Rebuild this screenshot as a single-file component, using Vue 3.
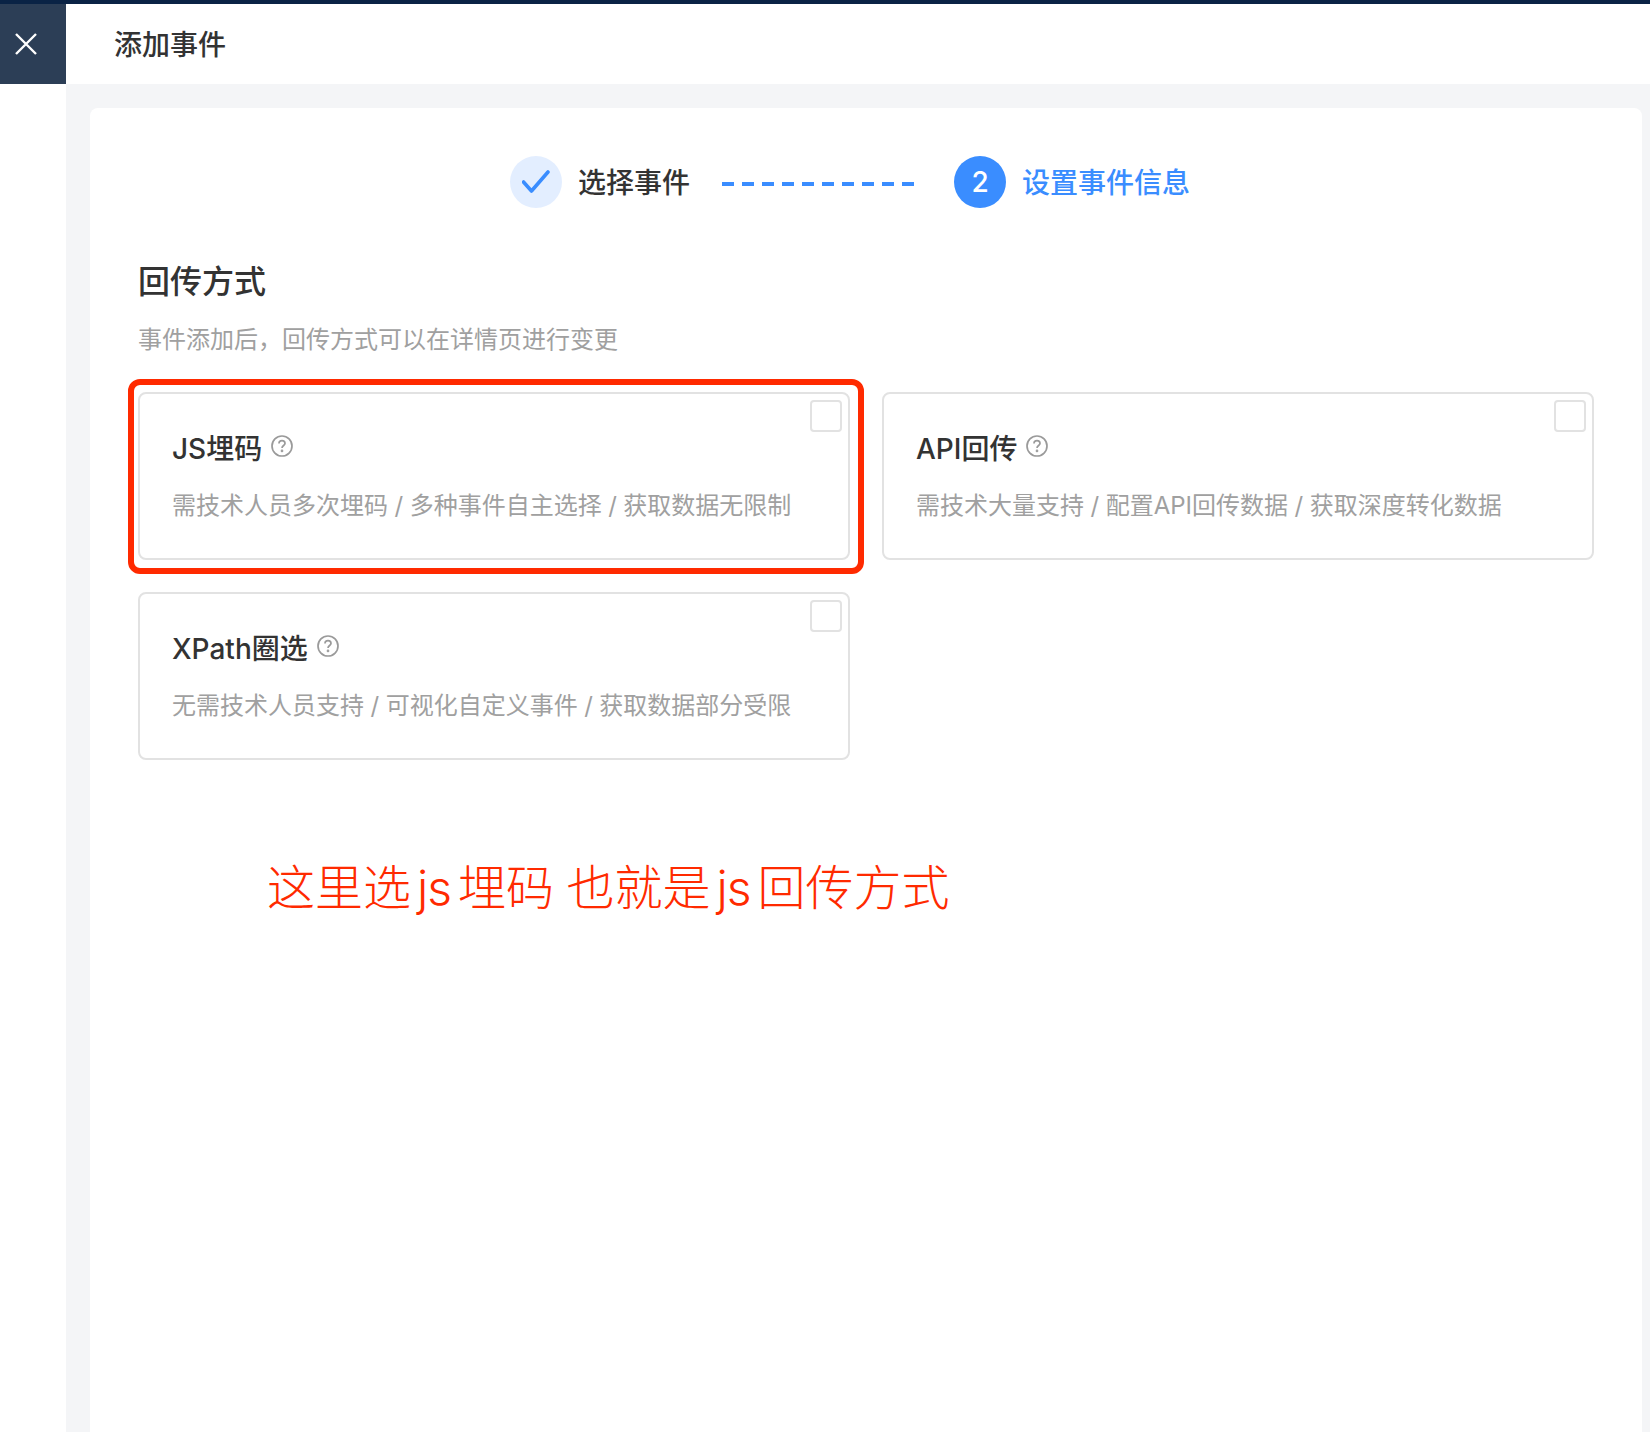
<script setup>
const cards = [
  { title: 'JS埋码', desc: '需技术人员多次埋码 / 多种事件自主选择 / 获取数据无限制', marked: true },
  { title: 'API回传', desc: '需技术大量支持 / 配置API回传数据 / 获取深度转化数据' },
  { title: 'XPath圈选', desc: '无需技术人员支持 / 可视化自定义事件 / 获取数据部分受限' }
]
</script>

<template>
  <div class="page">
    <div class="topline"></div>
    <header class="header">
      <div class="close">
        <svg width="24" height="24" viewBox="0 0 24 24" fill="none" stroke="#fff" stroke-width="2.4"><path d="M2 2L22 22M22 2L2 22"/></svg>
      </div>
      <div class="header-title">添加事件</div>
    </header>
    <div class="body">
      <div class="rail"></div>
      <main class="main">
        <section class="card">
          <div class="steps">
            <div class="circle done">
              <svg width="28" height="24" viewBox="0 0 28 24" fill="none" stroke="#3a8dff" stroke-width="3.6" stroke-linecap="round" stroke-linejoin="round"><path d="M1.5 12L9.5 21L26 2"/></svg>
            </div>
            <span class="step-label">选择事件</span>
            <div class="dash"></div>
            <div class="circle active">2</div>
            <span class="step-label blue">设置事件信息</span>
          </div>
          <h2 class="heading">回传方式</h2>
          <p class="sub">事件添加后，回传方式可以在详情页进行变更</p>
          <div class="grid">
            <div v-for="c in cards" :key="c.title" class="option" :class="{ marked: c.marked }">
              <span class="check"></span>
              <div class="option-title">
                <span>{{ c.title }}</span>
                <svg class="help" width="22" height="22" viewBox="0 0 22 22" fill="none" stroke="#9a9a9a" stroke-width="1.7">
                  <circle cx="11" cy="11" r="10"/>
                  <path d="M8 8.6C8 6.8 9.3 5.7 11 5.7S14 6.8 14 8.4C14 10.4 11 10.6 11 13"/>
                  <circle cx="11" cy="15.9" r="0.5" fill="#9a9a9a"/>
                </svg>
              </div>
              <div class="option-desc">{{ c.desc }}</div>
            </div>
          </div>
          <div class="note">这里选<span class="latin">js</span>埋码 也就是<span class="latin">js</span>回传方式</div>
        </section>
      </main>
    </div>
  </div>
</template>

<style>
html, body { margin: 0; background: #fff; overflow: hidden; }
</style>

<style scoped>
.page {
  width: 1650px;
  height: 1432px;
  overflow: hidden;
  display: flex;
  flex-direction: column;
  background: #fff;
  font-family: "Inter", "Noto Sans CJK SC", sans-serif;
  color: #333;
}
.topline { height: 4px; background: #0a2345; flex: none; }
.header { height: 80px; flex: none; display: flex; align-items: center; background: #fff; }
.close {
  width: 66px;
  height: 80px;
  background: #2c3e56;
  display: flex;
  align-items: center;
  justify-content: center;
  box-sizing: border-box;
  padding-right: 15px;
}
.header-title { margin: -2px 0 0 48px; font-size: 28px; font-weight: 500; color: #333; }
.body { flex: 1; display: flex; min-height: 0; }
.rail { width: 66px; flex: none; background: #fff; }
.main { flex: 1; background: #f4f5f7; padding: 24px 8px 0 24px; min-width: 0; }
.card {
  background: #fff;
  border-radius: 8px 8px 0 0;
  height: 100%;
  box-sizing: border-box;
  padding: 48px 48px 0 48px;
}
.steps { display: flex; align-items: center; height: 52px; padding-left: 372px; }
.circle {
  width: 52px;
  height: 52px;
  border-radius: 50%;
  display: flex;
  align-items: center;
  justify-content: center;
  flex: none;
}
.done { background: #e3eeff; }
.active { background: #3a8dff; color: #fff; font-size: 28px; font-weight: 500; }
.step-label { margin: 2px 0 0 16px; font-size: 28px; font-weight: 500; color: #333; line-height: 52px; }
.blue { color: #3a8dff; }
.dash {
  width: 192px;
  height: 4px;
  margin: 3px 40px 0 32px;
  background: repeating-linear-gradient(90deg, #3a8dff 0 12px, transparent 12px 20px);
}
.heading { margin: 52px 0 0; font-size: 32px; line-height: 44px; font-weight: 500; color: #333; }
.sub { margin: 19px 0 0; font-size: 24px; line-height: 34px; color: #a0a0a0; }
.grid {
  display: grid;
  grid-template-columns: 712px 712px;
  column-gap: 32px;
  row-gap: 32px;
  margin-top: 35px;
}
.option {
  position: relative;
  height: 168px;
  box-sizing: border-box;
  border: 2px solid #e2e2e2;
  border-radius: 8px;
  padding: 35px 32px 0;
}
.marked::after {
  content: "";
  position: absolute;
  left: -12px;
  top: -15px;
  width: 724px;
  height: 183px;
  border: 6px solid #ff2a00;
  border-radius: 12px;
}
.check {
  position: absolute;
  top: 6px;
  right: 6px;
  width: 32px;
  height: 32px;
  box-sizing: border-box;
  border: 2px solid #e2e2e2;
  border-radius: 4px;
}
.option-title {
  display: flex;
  align-items: center;
  gap: 9px;
  font-size: 28px;
  line-height: 40px;
  font-weight: 500;
  color: #333;
}
.help { margin-top: -6px; flex: none; }
.option-desc { margin-top: 20px; font-size: 24px; line-height: 34px; color: #a0a0a0; white-space: nowrap; word-spacing: -0.25px; }
.note {
  margin: 96px 0 0 129px;
  font-size: 48px;
  line-height: 64px;
  color: #ff2a00;
  font-weight: 300;
  white-space: nowrap;
  word-spacing: -1px;
}
.latin { margin: 0 7px 0 6px; letter-spacing: -1px; }
</style>
